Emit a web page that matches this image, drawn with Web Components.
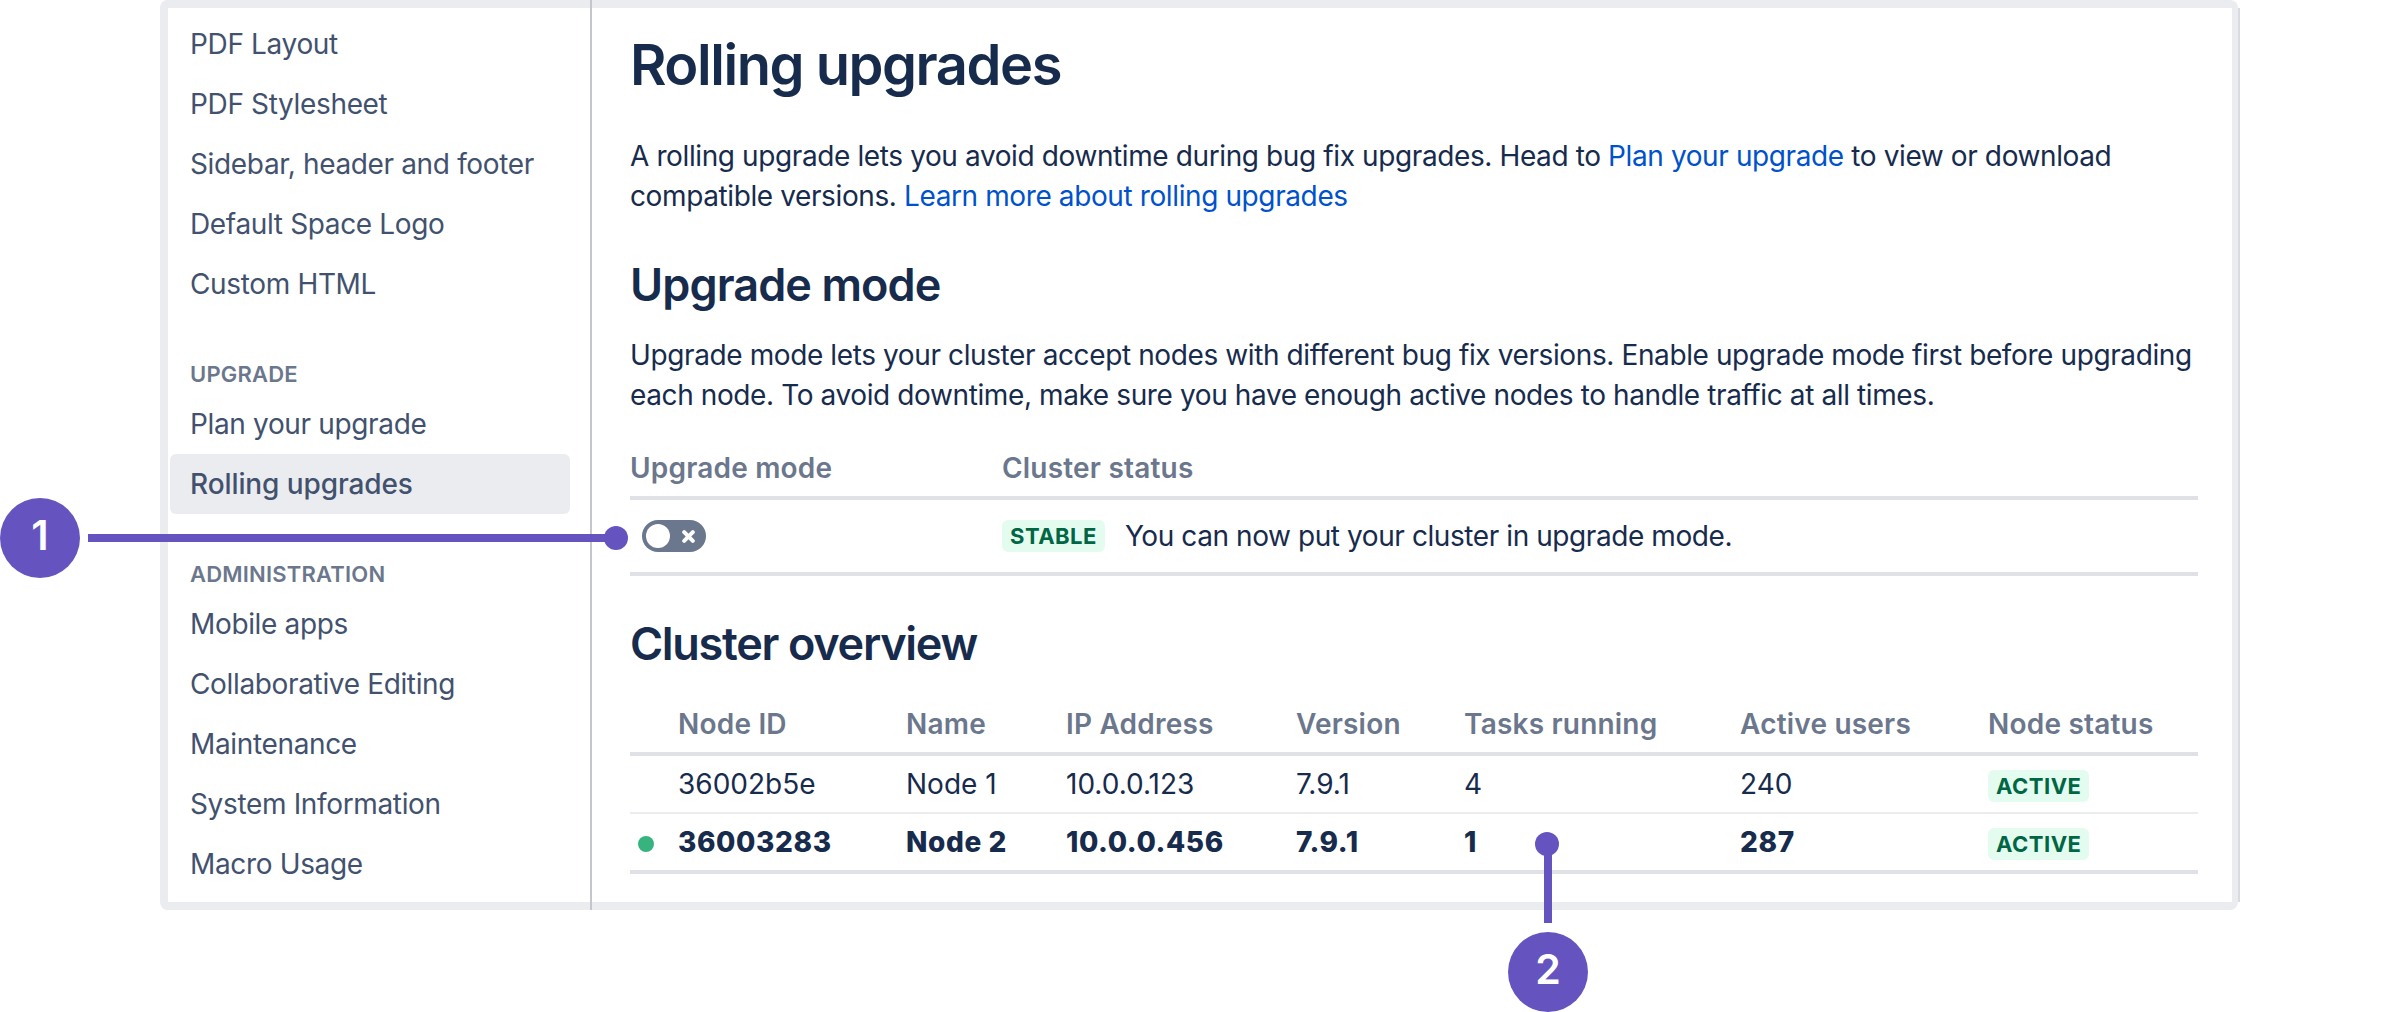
<!DOCTYPE html>
<html lang="en">
<head>
<meta charset="utf-8">
<title>Rolling upgrades</title>
<style>
  html, body { margin: 0; background: #fff; }
  body { font-family: Inter, "Liberation Sans", sans-serif; width: 2400px; height: 1012px; overflow: hidden; }
</style>
</head>
<body>
<admin-frame>
  <side-nav slot="nav">
    <nav-item>PDF Layout</nav-item>
    <nav-item>PDF Stylesheet</nav-item>
    <nav-item>Sidebar, header and footer</nav-item>
    <nav-item>Default Space Logo</nav-item>
    <nav-item>Custom HTML</nav-item>
    <nav-heading style="margin-top:40px">UPGRADE</nav-heading>
    <nav-item>Plan your upgrade</nav-item>
    <nav-item active>Rolling upgrades</nav-item>
    <nav-heading style="margin-top:40px">ADMINISTRATION</nav-heading>
    <nav-item>Mobile apps</nav-item>
    <nav-item>Collaborative Editing</nav-item>
    <nav-item>Maintenance</nav-item>
    <nav-item>System Information</nav-item>
    <nav-item>Macro Usage</nav-item>
  </side-nav>
  <upgrade-page slot="main"></upgrade-page>
</admin-frame>
<callout-marker num="1" dir="h"></callout-marker>
<callout-marker num="2" dir="v"></callout-marker>

<script>
class AdminFrame extends HTMLElement {
  constructor() {
    super();
    this.attachShadow({ mode: "open" });
    this.shadowRoot.innerHTML = `
      <style>
        :host {
          display: grid;
          grid-template-columns: 422px 1fr;
          position: relative;
          box-sizing: border-box;
          width: 2078px;
          height: 910px;
          margin-left: 160px;
          border: 8px solid #ebecf0;
          border-right: 0;
          border-radius: 8px;
          color: #172b4d;
        }
        .main {
          border-left: 2px solid #c4c6cb;
          padding-left: 38px;
          padding-right: 34px;
          border-right: 6px solid #ebecf0;
          box-shadow: 2px 0 0 #dadbe0;
          min-width: 0;
        }
        /* divider runs through the frame band */
        .rule { position: absolute; left: 422px; top: -8px; bottom: -8px; width: 2px; background: #c4c6cb; }
      </style>
      <slot name="nav"></slot>
      <div class="main"><slot name="main"></slot></div>
      <div class="rule"></div>
    `;
  }
}

class SideNav extends HTMLElement {
  constructor() {
    super();
    this.attachShadow({ mode: "open" });
    this.shadowRoot.innerHTML = `
      <style>
        :host { display: flex; flex-direction: column; padding: 6px 0 0 2px; }
      </style>
      <slot></slot>
    `;
  }
}

class NavItem extends HTMLElement {
  constructor() {
    super();
    this.attachShadow({ mode: "open" });
    this.shadowRoot.innerHTML = `
      <style>
        :host {
          display: flex;
          align-items: center;
          box-sizing: border-box;
          width: 400px;
          height: 60px;
          padding-left: 20px;
          border-radius: 6px;
          font-size: 28px;
          letter-spacing: -0.35px;
          color: #42526e;
        }
        :host([active]) { background: #ebecf0; font-weight: 500; letter-spacing: -0.1px; }
      </style>
      <slot></slot>
    `;
  }
}

class NavHeading extends HTMLElement {
  constructor() {
    super();
    this.attachShadow({ mode: "open" });
    this.shadowRoot.innerHTML = `
      <style>
        :host {
          display: flex;
          align-items: center;
          height: 40px;
          padding-left: 20px;
          font-size: 22px;
          font-weight: 600;
          letter-spacing: 0.2px;
          color: #6b778c;
        }
      </style>
      <slot></slot>
    `;
  }
}

class StatusLozenge extends HTMLElement {
  constructor() {
    super();
    this.attachShadow({ mode: "open" });
    this.shadowRoot.innerHTML = `
      <style>
        :host {
          display: flex;
          align-items: center;
          box-sizing: border-box;
          width: fit-content;
          height: 32px;
          padding: 0 8px;
          border-radius: 6px;
          background: #e3fcef;
          color: #006644;
          font-size: 22px;
          font-weight: 700;
          letter-spacing: 0.5px;
        }
      </style>
      <slot></slot>
    `;
  }
}

class ToggleSwitch extends HTMLElement {
  constructor() {
    super();
    this.attachShadow({ mode: "open" });
    this.shadowRoot.innerHTML = `
      <style>
        :host {
          display: flex;
          align-items: center;
          justify-content: space-between;
          box-sizing: border-box;
          width: 64px;
          height: 32px;
          padding: 0 11px 0 4px;
          border-radius: 16px;
          background: #6b778c;
        }
        .knob { width: 24px; height: 24px; border-radius: 50%; background: #fff; }
        svg { display: block; }
      </style>
      <div class="knob"></div>
      <svg width="13" height="13" viewBox="0 0 13 13">
        <path d="M2.2 2.2 L10.8 10.8 M10.8 2.2 L2.2 10.8" stroke="#fff" stroke-width="4" stroke-linecap="round" fill="none"/>
      </svg>
    `;
  }
}

class UpgradePage extends HTMLElement {
  constructor() {
    super();
    this.attachShadow({ mode: "open" });
    const nodes = [
      { id: "36002b5e", name: "Node 1", ip: "10.0.0.123", version: "7.9.1", tasks: "4", users: "240" },
      { id: "36003283", name: "Node 2", ip: "10.0.0.456", version: "7.9.1", tasks: "1", users: "287", current: true },
    ];
    const rows = nodes.map((n) => `
      <tr class="${n.current ? "current" : ""}">
        <td class="mark">${n.current ? '<span class="dot"></span>' : ""}</td>
        <td>${n.id}</td><td>${n.name}</td><td>${n.ip}</td><td>${n.version}</td><td>${n.tasks}</td><td>${n.users}</td>
        <td class="mark"><status-lozenge>ACTIVE</status-lozenge></td>
      </tr>`).join("");
    this.shadowRoot.innerHTML = `
      <style>
        :host { display: block; color: #172b4d; font-size: 28px; line-height: 40px; }
        h1 { margin: 22px 0 0; font-size: 56px; line-height: 70px; font-weight: 600; letter-spacing: -1.45px; }
        h2 { margin: 0; font-size: 45px; line-height: 56px; font-weight: 600; letter-spacing: -0.9px; }
        p { margin: 0; letter-spacing: -0.39px; }
        a { color: #0052cc; text-decoration: none; }
        .intro { margin-top: 36px; }
        .mode-title { margin-top: 41px; }
        .mode-text { margin-top: 22px; }
        .mode-head, .mode-row { display: grid; grid-template-columns: 372px 1fr; align-items: center; box-sizing: border-box; border-bottom: 4px solid #dfe1e6; }
        .mode-head {
          margin-top: 29px;
          height: 56px;
          padding-bottom: 4px;
          color: #6b778c;
          font-weight: 600;
          letter-spacing: 0.2px;
        }
        .mode-row { height: 76px; }
        .mode-row toggle-switch { margin-left: 12px; }
        .status { display: flex; align-items: center; gap: 20px; letter-spacing: -0.42px; }
        .status status-lozenge { letter-spacing: 0.5px; }
        .overview-title { margin-top: 40px; letter-spacing: -1.3px; }
        table { border-collapse: separate; border-spacing: 0; table-layout: fixed; width: 1568px; margin-top: 28px; }
        th, td { padding: 0; text-align: left; box-sizing: border-box; }
        th { height: 56px; padding-bottom: 4px; color: #6b778c; font-weight: 600; letter-spacing: 0.2px; border-bottom: 4px solid #dfe1e6; }
        td { height: 58px; border-bottom: 2px solid #ebecf0; }
        td.mark { padding-top: 4px; }
        tbody tr:last-child td { height: 60px; border-bottom: 4px solid #dfe1e6; }
        .current td { font-weight: 800; letter-spacing: 0.6px; }
        .current status-lozenge { font-weight: 700; letter-spacing: 0.5px; }
        .dot { display: block; width: 16px; height: 16px; margin-left: 8px; border-radius: 50%; background: #36b37e; }
      </style>
      <h1>Rolling upgrades</h1>
      <p class="intro">A rolling upgrade lets you avoid downtime during bug fix upgrades. Head to <a href="#">Plan your upgrade</a> to view or download compatible versions. <a href="#">Learn more about rolling upgrades</a></p>
      <h2 class="mode-title">Upgrade mode</h2>
      <p class="mode-text">Upgrade mode lets your cluster accept nodes with different bug fix versions. Enable upgrade mode first before upgrading each node. To avoid downtime, make sure you have enough active nodes to handle traffic at all times.</p>
      <div class="mode-head"><div>Upgrade mode</div><div>Cluster status</div></div>
      <div class="mode-row">
        <toggle-switch></toggle-switch>
        <div class="status"><status-lozenge>STABLE</status-lozenge><span>You can now put your cluster in upgrade mode.</span></div>
      </div>
      <h2 class="overview-title">Cluster overview</h2>
      <table>
        <colgroup>
          <col style="width:48px"><col style="width:228px"><col style="width:160px"><col style="width:230px">
          <col style="width:168px"><col style="width:276px"><col style="width:248px"><col style="width:210px">
        </colgroup>
        <thead>
          <tr><th></th><th>Node ID</th><th>Name</th><th>IP Address</th><th>Version</th><th>Tasks running</th><th>Active users</th><th>Node status</th></tr>
        </thead>
        <tbody>${rows}</tbody>
      </table>
    `;
  }
}

// numbered annotation laid over the screenshot, placed on its own free canvas
class CalloutMarker extends HTMLElement {
  constructor() {
    super();
    this.attachShadow({ mode: "open" });
  }

  connectedCallback() {
    const num = this.getAttribute("num");
    const horizontal = this.getAttribute("dir") === "h";
    this.shadowRoot.innerHTML = `
      <style>
        :host { display: block; position: absolute; left: 0; top: 0; }
        div { position: absolute; background: #6554c0; }
        .badge {
          box-sizing: border-box;
          width: 80px; height: 80px; border-radius: 50%;
          padding-bottom: 6px;
          display: flex; align-items: center; justify-content: center;
          color: #fff; font-size: 41px; font-weight: 600;
          font-family: Inter, "Liberation Sans", sans-serif;
        }
        .pin { width: 24px; height: 24px; border-radius: 50%; }
      </style>
      ${horizontal
        ? `<div class="badge" style="left:0;top:498px">${num}</div>
           <div style="left:88px;top:534px;width:520px;height:8px"></div>
           <div class="pin" style="left:604px;top:526px"></div>`
        : `<div class="badge" style="left:1508px;top:932px">${num}</div>
           <div style="left:1544px;top:850px;width:8px;height:73px"></div>
           <div class="pin" style="left:1535px;top:832px"></div>`}
    `;
  }
}

customElements.define("admin-frame", AdminFrame);
customElements.define("side-nav", SideNav);
customElements.define("nav-item", NavItem);
customElements.define("nav-heading", NavHeading);
customElements.define("status-lozenge", StatusLozenge);
customElements.define("toggle-switch", ToggleSwitch);
customElements.define("upgrade-page", UpgradePage);
customElements.define("callout-marker", CalloutMarker);
</script>
</body>
</html>
